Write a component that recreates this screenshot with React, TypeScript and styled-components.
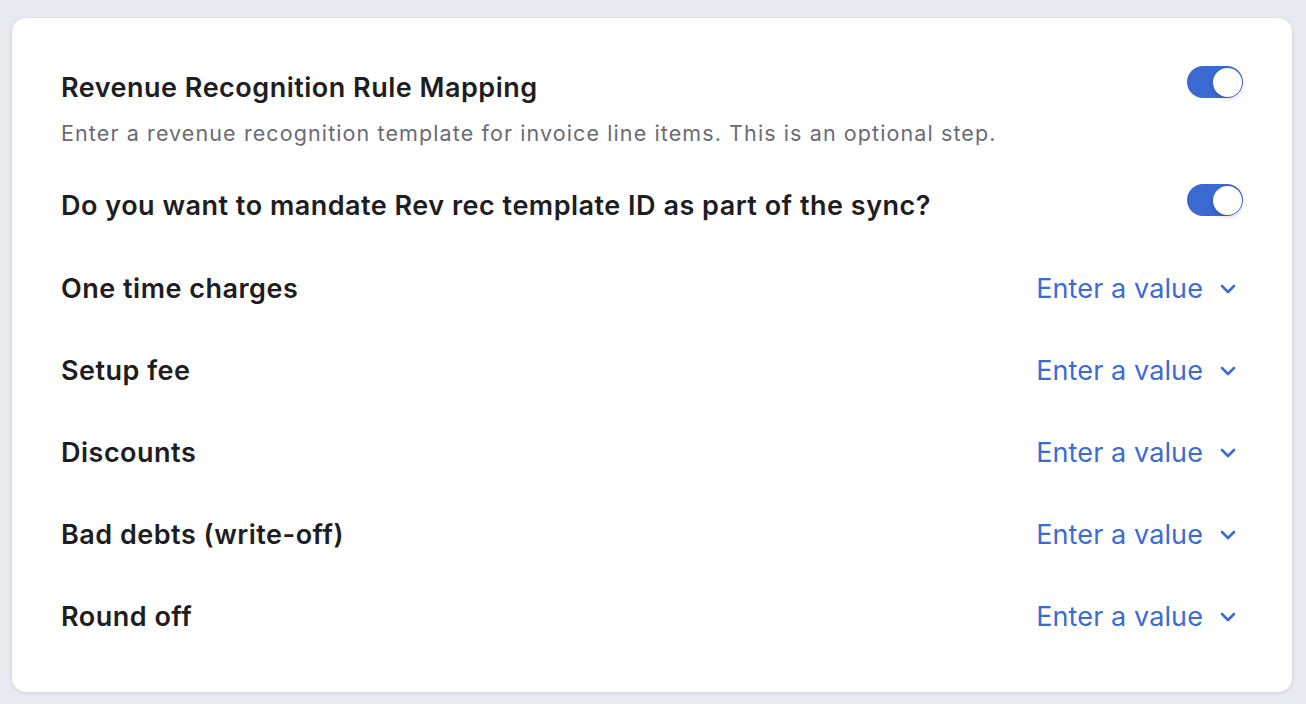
import React, { useState } from "react";
import styled, { createGlobalStyle } from "styled-components";

const GlobalStyle = createGlobalStyle`
  html, body {
    margin: 0;
    padding: 0;
    background: #e9e9f2;
  }
  body {
    font-family: Inter, "Noto Sans", "Liberation Sans", sans-serif;
    -webkit-font-smoothing: antialiased;
  }
`;

const Page = styled.div`
  padding: 18px 14px 12px 12px;
  box-sizing: border-box;
  width: 1306px;
  height: 704px;
`;

const Card = styled.div`
  background: #ffffff;
  border-radius: 14px;
  box-shadow: 0 1px 4px rgba(30, 30, 60, 0.12), 0 0 1px rgba(30, 30, 60, 0.08);
  padding: 48px 49px 35px 49px;
  box-sizing: border-box;
  height: 674px;
`;

const HeaderRow = styled.div<{ $mt?: number }>`
  display: flex;
  justify-content: space-between;
  align-items: flex-start;
  margin-top: ${(p) => p.$mt ?? 0}px;
`;

const HeaderText = styled.div`
  display: flex;
  flex-direction: column;
`;

const Title = styled.div`
  margin-top: 4px;
  font-size: 27px;
  line-height: 36px;
  font-weight: 600;
  color: #1d1d22;
  letter-spacing: 0.5px;
`;

const Description = styled.div`
  margin-top: 12px;
  font-size: 21.5px;
  line-height: 30px;
  color: #6b6b72;
  letter-spacing: 1.1px;
`;

const SwitchTrack = styled.button<{ $on: boolean }>`
  position: relative;
  width: 56px;
  height: 32px;
  border-radius: 16px;
  border: none;
  padding: 0;
  cursor: pointer;
  flex-shrink: 0;
  background: ${(p) => (p.$on ? "#3b69d2" : "#d4d4dc")};
`;

const SwitchKnob = styled.span<{ $on: boolean }>`
  position: absolute;
  top: 1.5px;
  left: ${(p) => (p.$on ? "25.5px" : "1.5px")};
  width: 29px;
  height: 29px;
  border-radius: 50%;
  background: #ffffff;
  box-shadow: 0 2px 4px rgba(0, 0, 0, 0.18);
`;

const List = styled.div`
  margin-top: 23px;
  display: flex;
  flex-direction: column;
`;

const MapRow = styled.div`
  height: 82px;
  display: flex;
  align-items: center;
  justify-content: space-between;
`;

const Label = styled.div`
  font-size: 27px;
  font-weight: 600;
  color: #1d1d22;
  letter-spacing: 0.5px;
`;

const Select = styled.button`
  display: flex;
  align-items: center;
  gap: 17px;
  background: none;
  border: none;
  padding: 0 7px 0 0;
  cursor: pointer;
  font-family: inherit;
  font-size: 27px;
  letter-spacing: 0.1px;
  color: #3a6bd6;
`;

const Chevron = styled.svg`
  width: 16px;
  height: 10px;
  margin-top: 2px;
`;

function Toggle({ initial }: { initial: boolean }) {
  const [on, setOn] = useState(initial);
  return (
    <SwitchTrack $on={on} onClick={() => setOn(!on)} aria-pressed={on}>
      <SwitchKnob $on={on} />
    </SwitchTrack>
  );
}

const rows = [
  "One time charges",
  "Setup fee",
  "Discounts",
  "Bad debts (write-off)",
  "Round off",
];

export default function App() {
  return (
    <>
      <GlobalStyle />
      <Page>
        <Card>
          <HeaderRow>
            <HeaderText>
              <Title>Revenue Recognition Rule Mapping</Title>
              <Description>
                Enter a revenue recognition template for invoice line items. This is an optional step.
              </Description>
            </HeaderText>
            <Toggle initial={true} />
          </HeaderRow>
          <HeaderRow $mt={36}>
            <Title>Do you want to mandate Rev rec template ID as part of the sync?</Title>
            <Toggle initial={true} />
          </HeaderRow>
          <List>
            {rows.map((r) => (
              <MapRow key={r}>
                <Label>{r}</Label>
                <Select>
                  Enter a value
                  <Chevron viewBox="0 0 16 10" fill="none">
                    <polyline
                      points="2,2 8,8 14,2"
                      stroke="#3a6bd6"
                      strokeWidth="2.6"
                      strokeLinecap="round"
                      strokeLinejoin="round"
                    />
                  </Chevron>
                </Select>
              </MapRow>
            ))}
          </List>
        </Card>
      </Page>
    </>
  );
}
